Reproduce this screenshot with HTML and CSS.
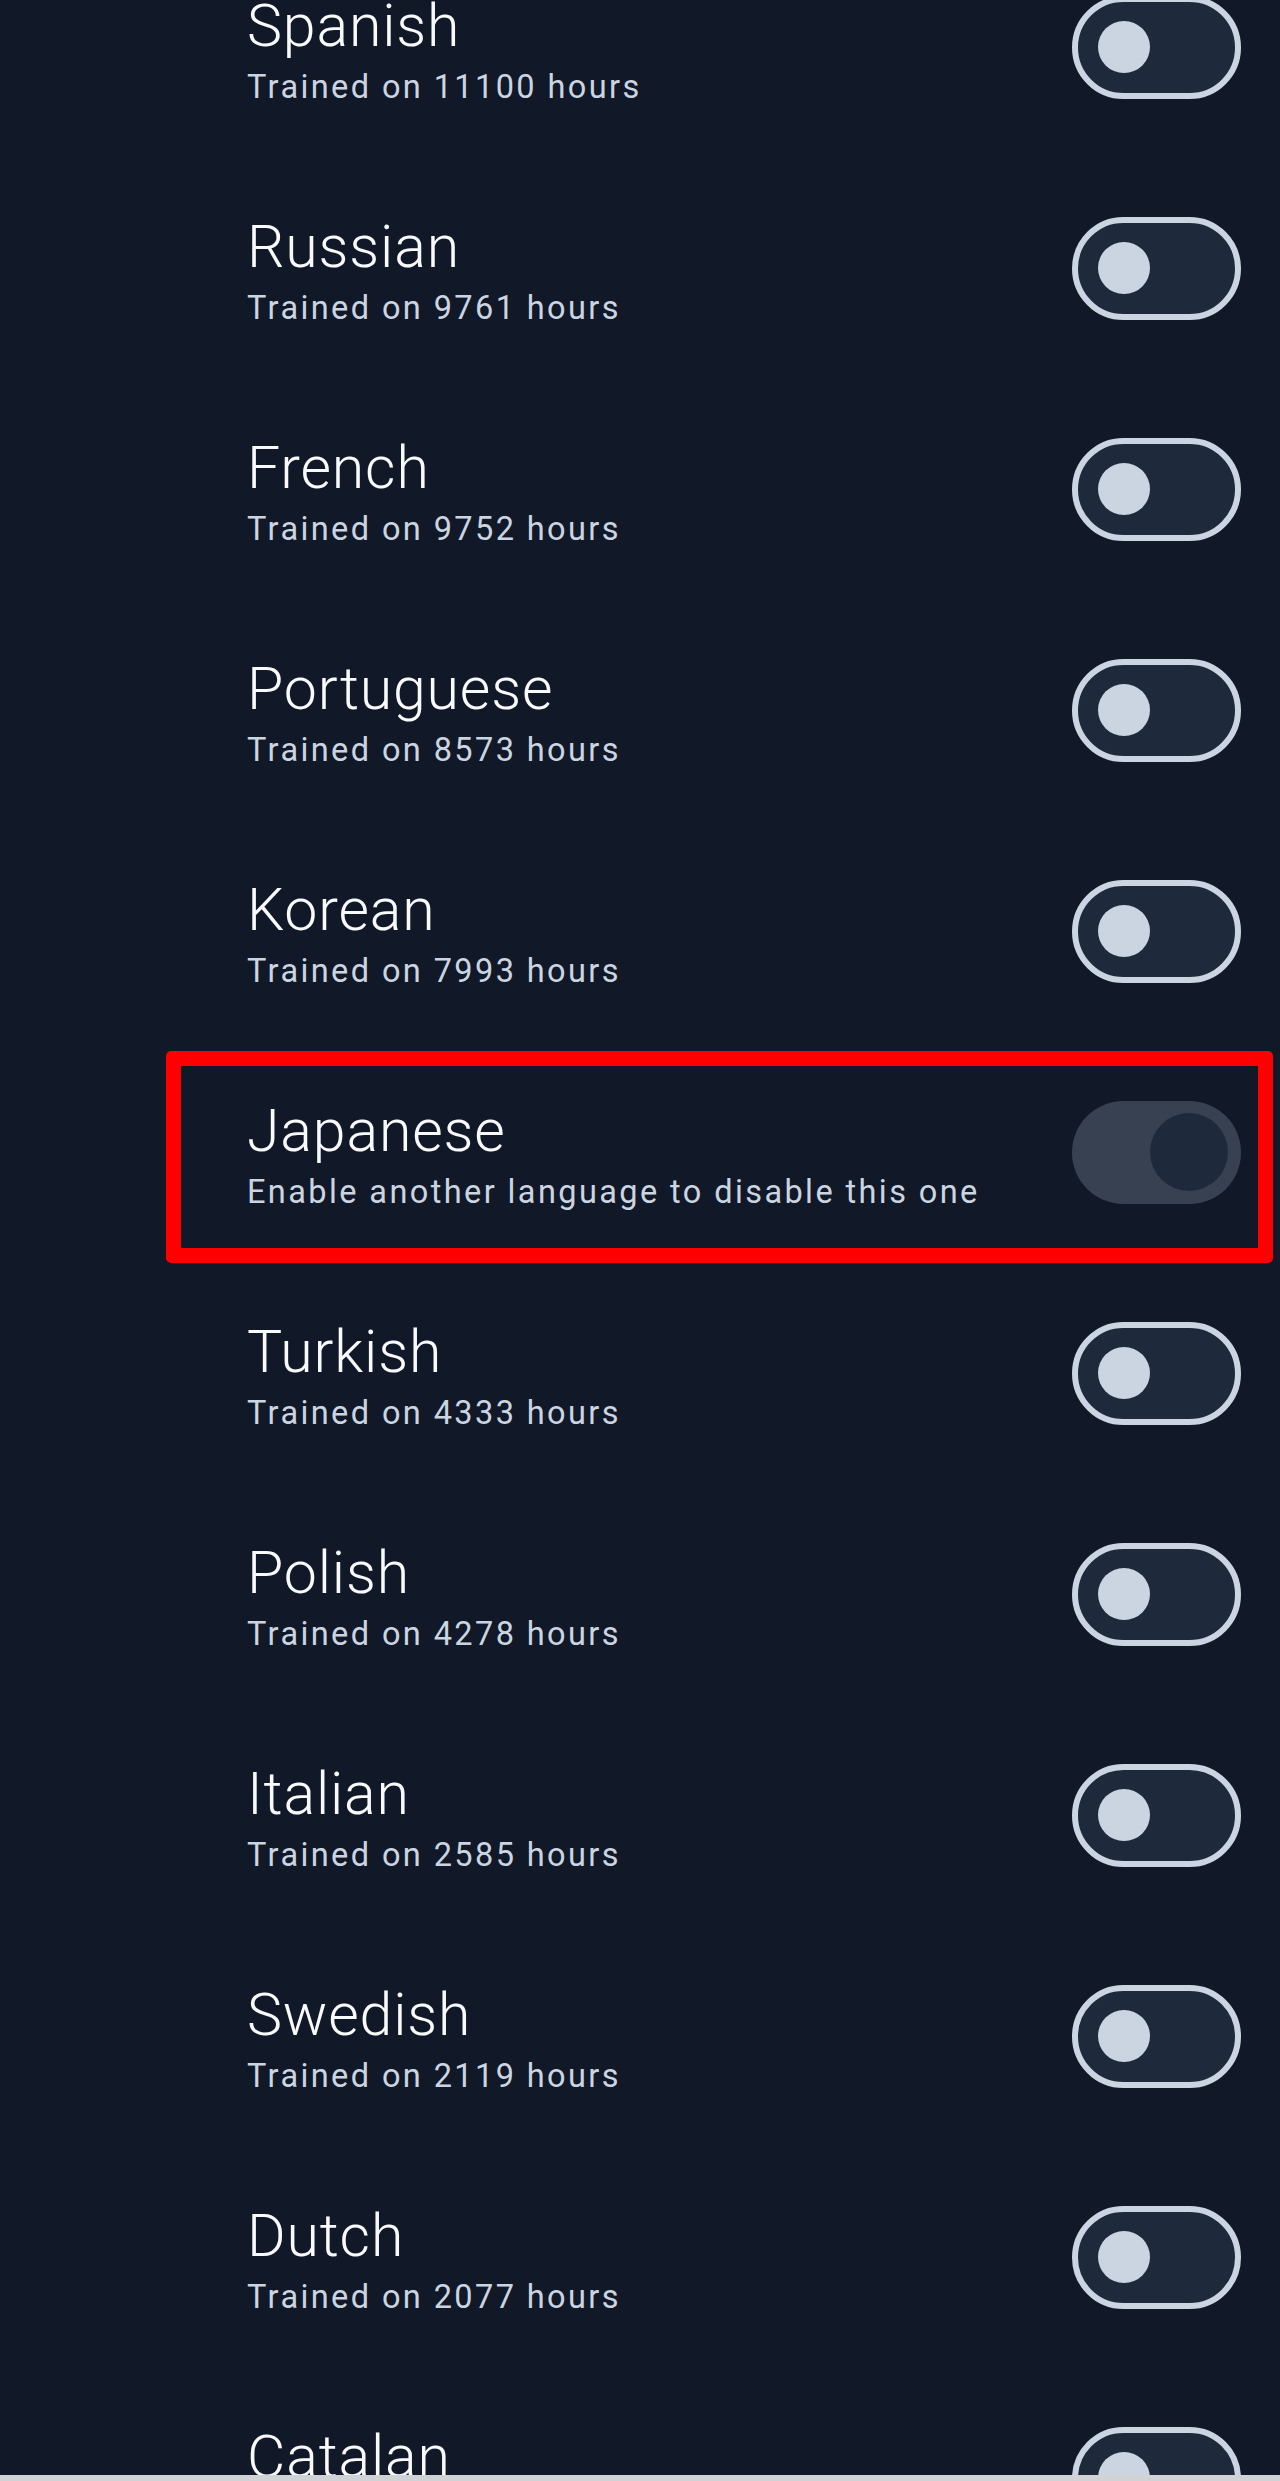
FILE: index.html
```html
<!DOCTYPE html>
<html lang="en">
<head>
    <meta charset="UTF-8">
    <meta name="viewport" content="width=device-width, initial-scale=1.0">
    <title>Languages</title>
    <link rel="stylesheet" href="styles.css">
</head>
<body>

<div class="screen">
    <div class="language-list">
        <div class="language-row">
            <div class="language-text">
                <div class="language-name">Spanish</div>
                <div class="language-info">Trained on 11100 hours</div>
            </div>
            <div class="switch"><span class="knob"></span></div>
        </div>
        <div class="language-row">
            <div class="language-text">
                <div class="language-name">Russian</div>
                <div class="language-info">Trained on 9761 hours</div>
            </div>
            <div class="switch"><span class="knob"></span></div>
        </div>
        <div class="language-row">
            <div class="language-text">
                <div class="language-name">French</div>
                <div class="language-info">Trained on 9752 hours</div>
            </div>
            <div class="switch"><span class="knob"></span></div>
        </div>
        <div class="language-row">
            <div class="language-text">
                <div class="language-name">Portuguese</div>
                <div class="language-info">Trained on 8573 hours</div>
            </div>
            <div class="switch"><span class="knob"></span></div>
        </div>
        <div class="language-row">
            <div class="language-text">
                <div class="language-name">Korean</div>
                <div class="language-info">Trained on 7993 hours</div>
            </div>
            <div class="switch"><span class="knob"></span></div>
        </div>
        <div class="language-row highlighted">
            <div class="language-text">
                <div class="language-name">Japanese</div>
                <div class="language-info">Enable another language to disable this one</div>
            </div>
            <div class="switch checked disabled"><span class="knob"></span></div>
            <div class="highlight-box"></div>
        </div>
        <div class="language-row">
            <div class="language-text">
                <div class="language-name">Turkish</div>
                <div class="language-info">Trained on 4333 hours</div>
            </div>
            <div class="switch"><span class="knob"></span></div>
        </div>
        <div class="language-row">
            <div class="language-text">
                <div class="language-name">Polish</div>
                <div class="language-info">Trained on 4278 hours</div>
            </div>
            <div class="switch"><span class="knob"></span></div>
        </div>
        <div class="language-row">
            <div class="language-text">
                <div class="language-name">Italian</div>
                <div class="language-info">Trained on 2585 hours</div>
            </div>
            <div class="switch"><span class="knob"></span></div>
        </div>
        <div class="language-row">
            <div class="language-text">
                <div class="language-name">Swedish</div>
                <div class="language-info">Trained on 2119 hours</div>
            </div>
            <div class="switch"><span class="knob"></span></div>
        </div>
        <div class="language-row">
            <div class="language-text">
                <div class="language-name">Dutch</div>
                <div class="language-info">Trained on 2077 hours</div>
            </div>
            <div class="switch"><span class="knob"></span></div>
        </div>
        <div class="language-row">
            <div class="language-text">
                <div class="language-name">Catalan</div>
                <div class="language-info">Trained on 1883 hours</div>
            </div>
            <div class="switch"><span class="knob"></span></div>
        </div>
    </div>
</div>
<div class="bottom-bar"></div>

</body>
</html>
```
FILE: styles.css
```css
body {
    font-family: Roboto, 'Noto Sans', sans-serif;
    background-color: #111827;
    margin: 0;
}
.screen {
    height: 2475px;
    overflow: hidden;
}
.language-list {
    margin-top: -63.5px;
}
.language-row {
    position: relative;
    height: 221px;
    display: flex;
    align-items: center;
    justify-content: space-between;
    padding: 0 39px 0 247px;
}
.language-text {
    padding-top: 10px;
}
.language-name {
    font-size: 59px;
    font-weight: 300;
    line-height: 70px;
    letter-spacing: 0.85px;
    color: #f8fafc;
}
.language-info {
    font-size: 32.5px;
    line-height: 51px;
    margin-top: 1px;
    letter-spacing: 2.4px;
    color: #cbd5e1;
}
.switch {
    box-sizing: border-box;
    width: 169px;
    height: 103px;
    border: 6.5px solid #cbd5e1;
    border-radius: 52px;
    background-color: #1e293b;
    display: flex;
    align-items: center;
    padding-left: 19.5px;
}
.knob {
    width: 52px;
    height: 52px;
    border-radius: 50%;
    background-color: #cbd5e1;
}
.switch.checked {
    justify-content: flex-end;
    padding: 0 13px 0 0;
    border: none;
}
.switch.disabled {
    background-color: #384152;
}
.switch.checked .knob {
    width: 78px;
    height: 78px;
    background-color: #1e293b;
}
.highlight-box {
    position: absolute;
    top: 9.5px;
    left: 166px;
    right: 7px;
    bottom: 0;
    border: 15px solid #ff0000;
    border-radius: 5px;
}
.bottom-bar {
    height: 6px;
    background-color: #d1d2d6;
}
```
